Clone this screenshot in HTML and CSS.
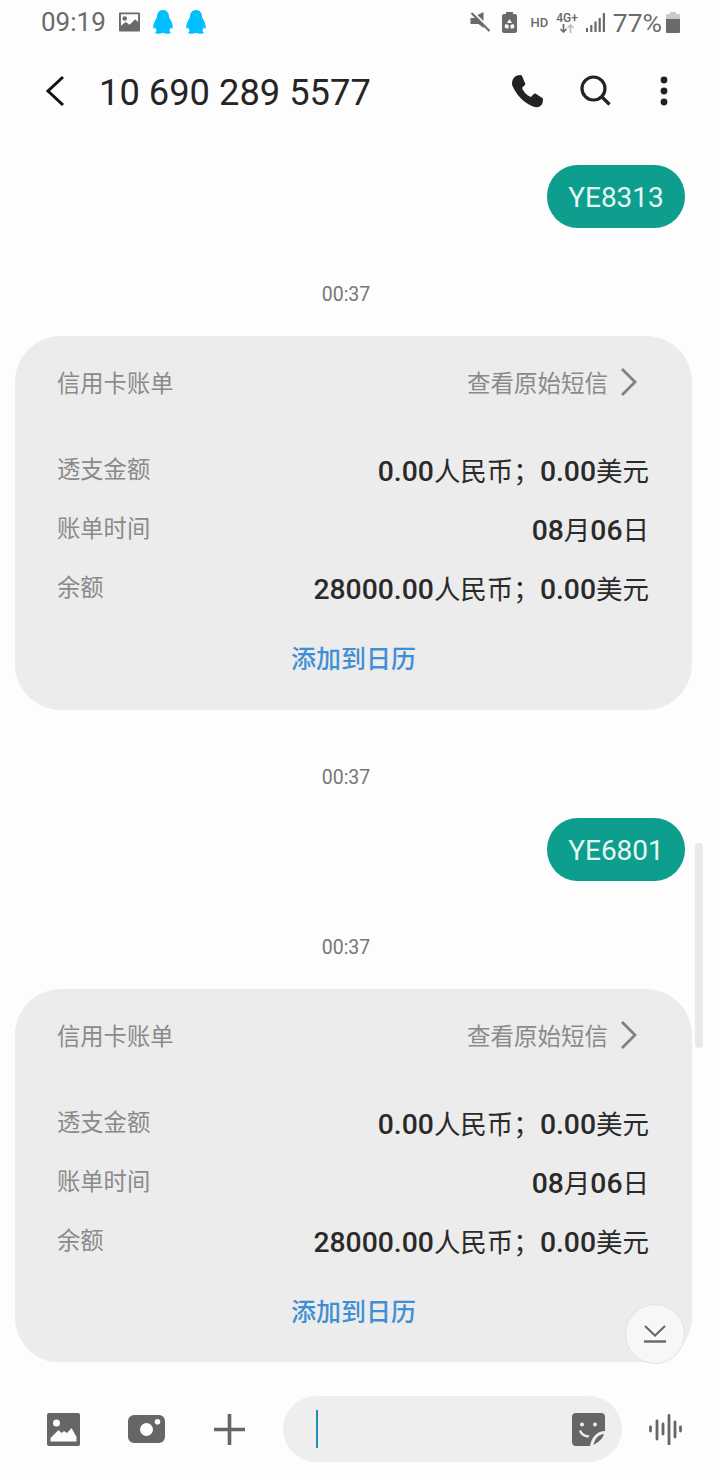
FILE: index.html
```html
<!DOCTYPE html>
<html lang="zh-CN">
<head>
  <meta charset="UTF-8">
  <title>10 690 289 5577</title>
  <link rel="stylesheet" href="styles.css">
</head>
<body>

<div class="phone">
  <div class="status-bar">
    <div class="status-left">
      <span class="clock">09:19</span>
      <svg class="ic-gallery" width="21" height="20" viewBox="0 0 22 20"><path fill="#6a6a6a" fill-rule="evenodd" d="M1 0h20a1 1 0 0 1 1 1v18a1 1 0 0 1-1 1H1a1 1 0 0 1-1-1V1a1 1 0 0 1 1-1zm1 2v12l5-4 4 3 6-6 3 3V2zM6 4a2.400 2.400 0 1 1 0 4.800A2.400 2.400 0 0 1 6 4z"/></svg>
      <svg class="ic-qq" width="20" height="24" viewBox="0 0 21 25"><path fill="#00bfff" d="M10.500 0C15 0 16.800 3.500 17 8c2 3 4 7 3.800 10.500-.1 1.500-1 1-2.300-.5-.2 1.500-.7 3-1.500 4 1.300.5 1.800 1.300 1.500 2-.4.800-5 1.100-7.500 0h-1c-2.500 1.100-7.100.8-7.500 0-.3-.7.2-1.500 1.500-2-.8-1-1.300-2.500-1.500-4C1.200 19.500.3 20 .2 18.500 0 15 2 11 4 8c.2-4.500 2-8 6.500-8z"/></svg>
      <svg class="ic-qq" width="20" height="24" viewBox="0 0 21 25"><path fill="#00bfff" d="M10.500 0C15 0 16.800 3.500 17 8c2 3 4 7 3.800 10.500-.1 1.500-1 1-2.300-.5-.2 1.500-.7 3-1.500 4 1.300.5 1.800 1.300 1.500 2-.4.800-5 1.100-7.500 0h-1c-2.500 1.100-7.100.8-7.500 0-.3-.7.2-1.500 1.500-2-.8-1-1.300-2.500-1.500-4C1.200 19.500.3 20 .2 18.500 0 15 2 11 4 8c.2-4.500 2-8 6.500-8z"/></svg>
    </div>
    <div class="status-right">
      <svg width="21" height="20" viewBox="0 0 20 20"><path fill="#6a6a6a" d="M0 6h4l1-1 8 9v2L8 12H0zM7 3l6-3v9z"/><path stroke="#6a6a6a" stroke-width="2.200" d="M1 1l18 18"/></svg>
      <svg class="ic-saver" width="15" height="21" viewBox="0 0 15 21"><path fill="#6a6a6a" fill-rule="evenodd" d="M4 0h7v2h2a2 2 0 0 1 2 2v15a2 2 0 0 1-2 2H2a2 2 0 0 1-2-2V4a2 2 0 0 1 2-2h2zm3.500 7L5 11h5zM3.500 12L2.500 15l2 1.500h2V13zM11.500 12l-3 1v3.500h2.500l1.500-1.500z"/></svg>
      <span class="hd">HD</span>
      <span class="net">
        <span class="net-label">4G+</span>
        <svg width="16" height="9" viewBox="0 0 16 9"><path stroke="#6a6a6a" stroke-width="1.600" fill="none" d="M4.500 0v8M1.500 5l3 3 3-3"/><path stroke="#bbb" stroke-width="1.600" fill="none" d="M11.500 9V1M8.500 4l3-3 3 3"/></svg>
      </span>
      <svg class="ic-signal" width="19" height="19" viewBox="0 0 19 19"><path fill="#6a6a6a" d="M0 15h2v4H0zM4.200 12h2.200v7H4.200zM8.400 8.500h2.200V19H8.400zM12.600 5h2.200v14h-2.200zM16.800 0H19v19h-2.200z"/></svg>
      <span class="battery-text">77%</span>
      <svg width="14" height="21" viewBox="0 0 14 21"><path fill="#c8c8c8" d="M4 0h6v2h3a1 1 0 0 1 1 1v4H0V3a1 1 0 0 1 1-1h3z"/><path fill="#6a6a6a" d="M0 7h14v13a1 1 0 0 1-1 1H1a1 1 0 0 1-1-1z"/></svg>
    </div>
  </div>

  <header class="top-bar">
    <svg class="ic-back" width="22" height="32" viewBox="0 0 22 32"><path fill="none" stroke="#111" stroke-width="3" d="M19 2L4 16l15 14"/></svg>
    <h1 class="number">10 690 289 5577</h1>
    <div class="top-actions">
      <svg class="ic-call" width="33" height="33" viewBox="0 0 33 33"><path fill="#222" d="M6 .5L9.500 0c.8 0 1.300.5 1.600 1.200l3 7c.3.800.1 1.400-.5 2L11 13c2 4.500 4.500 7 9 9l2.800-3c.6-.6 1.300-.7 2-.3l6.500 4.300c.6.400.8 1 .7 1.700l-.5 3.300C30.500 31.500 26.500 33.500 22 31.500 12 27 5.500 20 1.500 11 0 7 2 2 6 .5z"/></svg>
      <svg class="ic-search" width="32" height="32" viewBox="0 0 32 32"><circle cx="13.500" cy="13.500" r="11.500" fill="none" stroke="#222" stroke-width="3.200"/><path stroke="#222" stroke-width="3.200" d="M21.500 21.500l8 8"/></svg>
      <svg class="ic-more" width="8" height="30" viewBox="0 0 8 30"><circle cx="4" cy="4" r="3.400" fill="#222"/><circle cx="4" cy="15" r="3.400" fill="#222"/><circle cx="4" cy="26" r="3.400" fill="#222"/></svg>
    </div>
  </header>

  <main class="thread">
    <div class="bubble">YE8313</div>
    <div class="stamp">00:37</div>

    <section class="bill">
      <div class="bill-head">
        <span>信用卡账单</span>
        <span class="bill-source">查看原始短信
          <svg width="18" height="30" viewBox="0 0 18 30"><path fill="none" stroke="#808080" stroke-width="2.800" d="M2 2l13 13L2 28"/></svg>
        </span>
      </div>
      <div class="bill-row"><span class="bill-label">透支金额</span><span class="bill-value"><b>0.00</b>人民币；<b>0.00</b>美元</span></div>
      <div class="bill-row"><span class="bill-label">账单时间</span><span class="bill-value"><b>08</b>月<b>06</b>日</span></div>
      <div class="bill-row"><span class="bill-label">余额</span><span class="bill-value"><b>28000.00</b>人民币；<b>0.00</b>美元</span></div>
      <div class="bill-link">添加到日历</div>
    </section>

    <div class="stamp stamp-near">00:37</div>
    <div class="bubble">YE6801</div>
    <div class="stamp">00:37</div>

    <section class="bill">
      <div class="bill-head">
        <span>信用卡账单</span>
        <span class="bill-source">查看原始短信
          <svg width="18" height="30" viewBox="0 0 18 30"><path fill="none" stroke="#808080" stroke-width="2.800" d="M2 2l13 13L2 28"/></svg>
        </span>
      </div>
      <div class="bill-row"><span class="bill-label">透支金额</span><span class="bill-value"><b>0.00</b>人民币；<b>0.00</b>美元</span></div>
      <div class="bill-row"><span class="bill-label">账单时间</span><span class="bill-value"><b>08</b>月<b>06</b>日</span></div>
      <div class="bill-row"><span class="bill-label">余额</span><span class="bill-value"><b>28000.00</b>人民币；<b>0.00</b>美元</span></div>
      <div class="bill-link">添加到日历</div>
    </section>
  </main>

  <footer class="composer">
    <svg class="ic-pic" width="33" height="33" viewBox="0 0 33 33"><path fill="#666" fill-rule="evenodd" d="M2 0h29a2 2 0 0 1 2 2v29a2 2 0 0 1-2 2H2a2 2 0 0 1-2-2V2a2 2 0 0 1 2-2zm1.500 28.500h26V24l-5-9-4.500 5-3-2-2.500 2-3-3-5 5-3 3zM9.500 6.500a3.500 3.500 0 1 0 0 7 3.500 3.500 0 0 0 0-7z"/></svg>
    <svg class="ic-cam" width="37" height="28" viewBox="0 0 37 28"><path fill="#666" fill-rule="evenodd" d="M6 0h25a6 6 0 0 1 6 6v16a6 6 0 0 1-6 6H6a6 6 0 0 1-6-6V6a6 6 0 0 1 6-6zm12.500 8a6.500 6.500 0 1 0 0 13 6.500 6.500 0 0 0 0-13zM29.500 4a2.800 2.800 0 1 0 0 5.600 2.800 2.800 0 0 0 0-5.600z"/></svg>
    <svg class="ic-plus" width="31" height="31" viewBox="0 0 31 31"><path stroke="#666" stroke-width="3.600" d="M15.500 0v31M0 15.500h31"/></svg>
    <div class="input-pill">
      <span class="caret"></span>
      <svg width="33" height="33" viewBox="0 0 33 33"><path fill="#666" fill-rule="evenodd" d="M4 0h25a4 4 0 0 1 4 4v14c-6 0-13 4-15 15H4a4 4 0 0 1-4-4V4a4 4 0 0 1 4-4zm6 9.500a2 2 0 1 0 0 4 2 2 0 0 0 0-4zm13 0a2 2 0 1 0 0 4 2 2 0 0 0 0-4zM7 18c1.500 4 5 6.500 9.500 6.500l1-2.300c-4 0-7-1.500-8.500-5.200zM32 21c-5 .5-9 4-10.500 11 5-3 9-6 10.500-11z"/></svg>
    </div>
    <svg class="ic-voice" width="33" height="31" viewBox="0 0 33 31"><path stroke="#666" stroke-width="2.800" stroke-linecap="round" d="M1.500 13v4M8 7v18M14 10v10M20 1.500v29M26 8v15M31.500 13v4"/></svg>
  </footer>

  <!-- elementos flotantes sobre la conversacion -->
  <div class="scrollbar"></div>
  <div class="to-bottom">
    <svg width="22" height="18" viewBox="0 0 22 18"><path fill="none" stroke="#666" stroke-width="2" d="M1 1l10 9.500L21 1"/><path stroke="#666" stroke-width="2.400" d="M0 16.500h22"/></svg>
  </div>
</div>

</body>
</html>
```
FILE: styles.css
```css
* {
  box-sizing: border-box;
}

body {
  margin: 0;
  padding: 0;
  background: #fdfdfd;
  font-family: Roboto, "Noto Sans CJK SC", sans-serif;
}

.phone {
  width: 720px;
  height: 1480px;
  position: relative;
  overflow: hidden;
  display: flex;
  flex-direction: column;
}

.status-bar {
  height: 44px;
  padding: 0 40px 0 41px;
  display: flex;
  justify-content: space-between;
  align-items: center;
  color: #6a6a6a;
}

.status-left,
.status-right {
  display: flex;
  align-items: center;
}

.clock {
  font-size: 26px;
  margin-right: 13px;
}

.ic-qq {
  margin-left: 13px;
}

.status-right svg {
  flex: none;
}

.ic-saver {
  margin-left: 11px;
}

.hd {
  font-size: 13px;
  font-weight: 500;
  margin-left: 13px;
}

.net {
  display: flex;
  flex-direction: column;
  align-items: center;
  margin-left: 8px;
  line-height: 12px;
}

.net-label {
  font-size: 12px;
  font-weight: 500;
}

.ic-signal {
  margin-left: 8px;
}

.battery-text {
  font-size: 26.500px;
  margin: 0 4px 0 8px;
}

.top-bar {
  height: 94px;
  padding: 0 52px 0 44px;
  display: flex;
  align-items: center;
}

.number {
  flex: 1;
  margin: 2px 0 0 33px;
  font-size: 36.300px;
  font-weight: 400;
  color: #252525;
}

.top-actions {
  display: flex;
  align-items: center;
}

.ic-search {
  margin-left: 36px;
}

.ic-more {
  margin-left: 48px;
}

.thread {
  flex: 1;
  padding: 27px 28px 0 15px;
  overflow: hidden;
}

.bubble {
  width: 138px;
  height: 63px;
  margin: 0 7px 0 auto;
  border-radius: 31px;
  background: #0d9e8e;
  color: #e6f7f4;
  font-size: 28px;
  line-height: 66px;
  text-align: center;
}

.stamp {
  height: 24px;
  margin: 55px 0 29px;
  padding-right: 15px;
  text-align: center;
  font-size: 19.500px;
  line-height: 24px;
  color: #777;
}

.stamp-near {
  margin: 56px 0 28px;
}

.bill {
  width: 677px;
  height: 374px;
  padding: 0 42px;
  border-radius: 46px;
  background: #ececec;
}

.bill-head {
  height: 92px;
  margin-bottom: 12px;
  display: flex;
  justify-content: space-between;
  align-items: center;
  font-size: 23.300px;
  color: #8a8a8a;
}

.bill-source {
  display: flex;
  align-items: center;
  gap: 12px;
  padding-right: 12px;
  font-size: 23.500px;
}

.bill-row {
  height: 59px;
  display: flex;
  justify-content: space-between;
  align-items: center;
}

.bill-label {
  font-size: 23.300px;
  color: #8a8a8a;
  margin-top: -3px;
}

.bill-value {
  font-size: 26.500px;
  color: #2a2a2a;
  margin-right: 1px;
}

.bill-value b {
  font-size: 28.300px;
  font-weight: 500;
  color: #2a2a2a;
}

.bill-link {
  margin-top: 22px;
  text-align: center;
  font-size: 25px;
  font-weight: 500;
  color: #3f8fd6;
}

.composer {
  height: 118px;
  padding: 16px 37px 0 47px;
  display: flex;
  align-items: center;
  position: relative;
}

.ic-cam {
  margin-left: 48px;
}

.ic-plus {
  margin-left: 49px;
}

.input-pill {
  width: 339px;
  height: 66px;
  margin-left: 38px;
  padding: 0 17px 0 33px;
  border-radius: 33px;
  background: #eeeeee;
  display: flex;
  justify-content: space-between;
  align-items: center;
}

.caret {
  width: 2px;
  height: 38px;
  background: #1f8fb8;
}

.ic-voice {
  margin-left: 27px;
}

.scrollbar {
  position: absolute;
  left: 695px;
  top: 843px;
  width: 8px;
  height: 205px;
  border-radius: 4px;
  background: #e9e9e9;
}

.to-bottom {
  position: absolute;
  left: 625px;
  top: 1304px;
  width: 60px;
  height: 60px;
  border-radius: 50%;
  background: #f7f7f7;
  border: 1px solid #e2e2e2;
  display: flex;
  justify-content: center;
  align-items: center;
}
```
